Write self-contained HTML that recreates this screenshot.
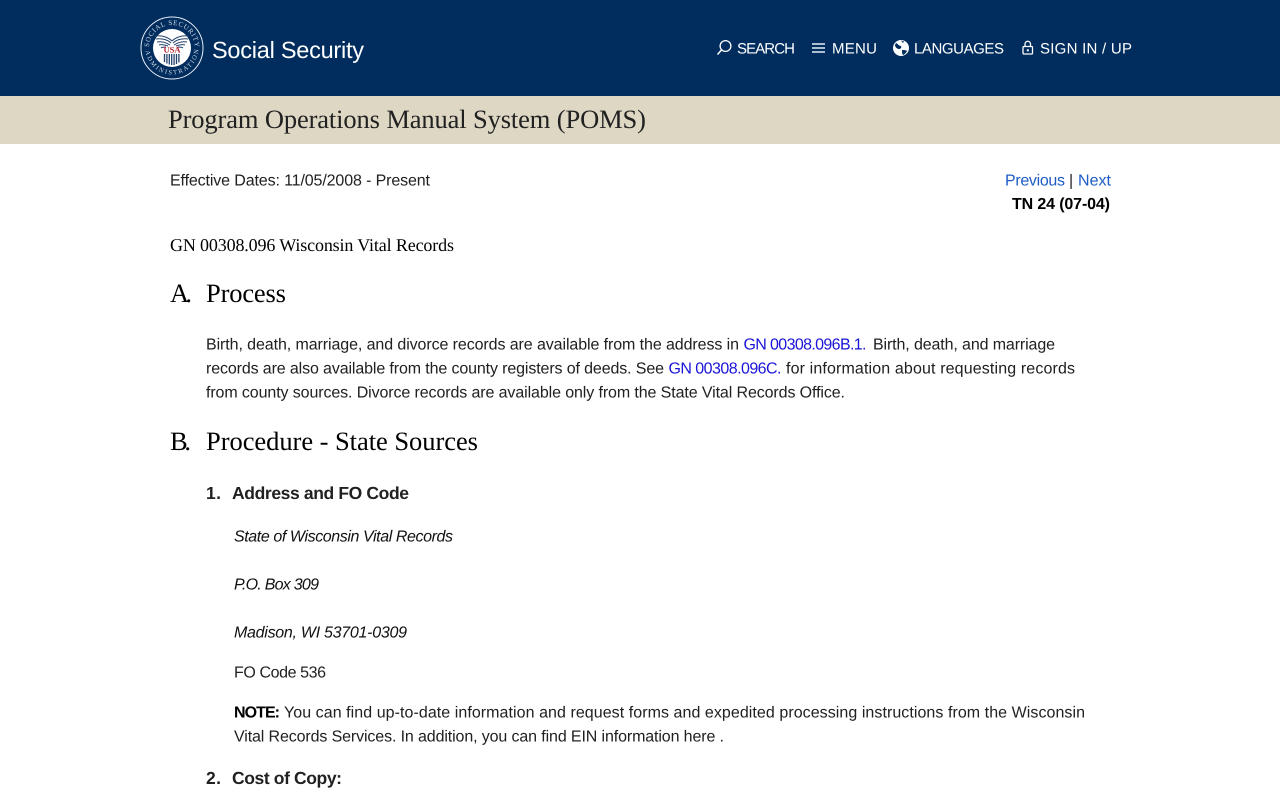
<!DOCTYPE html>
<html lang="en"><head><meta charset="utf-8"><title>POMS - GN 00308.096 Wisconsin Vital Records</title>
<style>
html,body{margin:0;padding:0;background:#fff;width:1280px;height:800px;overflow:hidden}
svg{position:absolute;left:0;top:0;display:block}
text{white-space:pre;text-rendering:geometricPrecision}
.s{font-family:"Liberation Sans",sans-serif;font-size:16px;fill:#212121}
.g{font-family:"Liberation Serif",serif}
.i{font-style:italic;fill:#111}
.b{font-weight:bold}
.l{fill:#1a14d8}
.p{fill:#1f5cc4}
.n{font-family:"Liberation Sans",sans-serif;font-size:15px;fill:#fff}
</style></head><body>
<svg width="1280" height="800" viewBox="0 0 1280 800" xmlns="http://www.w3.org/2000/svg">
<rect width="1280" height="96" fill="#002d5e"/>
<rect y="96" width="1280" height="48" fill="#ddd7c4"/>

<!-- logo -->
<circle cx="172" cy="48" r="31" fill="none" stroke="#e8eef5" stroke-width="1"/>
<circle cx="172" cy="48" r="19" fill="#fff"/>
<defs>
<path id="top" d="M149 48a23 23 0 0 1 46 0"/>
<path id="bot" d="M145.500 48a26.500 26.500 0 0 0 53 0"/>
</defs>
<text font-family="Liberation Serif,serif" font-size="7" fill="#cfd9e6"><textPath href="#top" startOffset="1" textLength="70">SOCIAL SECURITY</textPath></text>
<text font-family="Liberation Serif,serif" font-size="6.500" fill="#cfd9e6"><textPath href="#bot" startOffset="3" textLength="78">ADMINISTRATION</textPath></text>
<g fill="none" stroke="#24426c" stroke-width="1">
<path d="M172 41c-3-3-9-6-17-5"/><path d="M171 43c-3-3-9-5-15-4"/><path d="M170 45c-3-2-8-4-13-3"/><path d="M168 46c-3-1-6-2-9-1"/><path d="M166 47c-2 0-4 0-5 1"/>
<path d="M172 41c3-3 9-6 17-5"/><path d="M173 43c3-3 9-5 15-4"/><path d="M174 45c3-2 8-4 13-3"/><path d="M176 46c3-1 6-2 9-1"/><path d="M178 47c2 0 4 0 5 1"/>
</g>
<text x="172" y="52.500" text-anchor="middle" font-family="Liberation Serif,serif" font-size="8.500" font-weight="bold" fill="#b3232f">USA</text>
<path d="M164.500 54v8M166.900 54v9.500M169.300 54v10.500M171.700 54v11M174.100 54v11M176.500 54v10M178.900 54v8.500" stroke="#24426c" stroke-width="1.300"/>

<text class="n" x="212" y="58" style="font-size:23.500px" textLength="152">Social Security</text>

<!-- nav icons -->
<circle cx="725.500" cy="46" r="5.400" fill="none" stroke="#fff" stroke-width="1.300"/>
<path d="M721.500 50l-4 4.500" stroke="#fff" stroke-width="1.500" fill="none"/>
<text class="n" x="737" y="53.500" textLength="58">SEARCH</text>
<path d="M812 44h13M812 48h13M812 52h13" stroke="#e6edf5" stroke-width="1.500"/>
<text class="n" x="832" y="53.500" textLength="45">MENU</text>
<circle cx="901" cy="48" r="8" fill="#fff"/>
<path d="M896 43c2 1 3 3 5 3 1 2-1 3-2 3-2 0-4-2-4-4zM902 50c2 0 4 0 5 1-1 2-3 4-4 4-1-1-1-3-1-5zM901 40.500l3 1-1 1.500z" fill="#002d5e"/>
<text class="n" x="914" y="53.500" textLength="90">LANGUAGES</text>
<rect x="1023" y="46.500" width="9.500" height="7.500" rx="1" fill="none" stroke="#fff" stroke-width="1.300"/>
<path d="M1025 46.500v-2.500a2.750 2.750 0 0 1 5.500 0v2.500" fill="none" stroke="#fff" stroke-width="1.300"/>
<rect x="1026.800" y="49.300" width="2" height="2" fill="#fff"/>
<text class="n" x="1040" y="53.500" textLength="92">SIGN IN / UP</text>

<!-- banner -->
<text class="g" x="168" y="128" font-size="26.500" fill="#212121" textLength="478">Program Operations Manual System (POMS)</text>

<!-- meta -->
<text class="s" x="170" y="185.500" textLength="260">Effective Dates: 11/05/2008 - Present</text>
<text class="s p" x="1005" y="185.500" textLength="60">Previous</text>
<text class="s" x="1069" y="185.500">|</text>
<text class="s p" x="1078" y="185.500" textLength="33">Next</text>
<text class="s b" x="1012" y="209" style="font-size:16px;fill:#000" textLength="98">TN 24 (07-04)</text>

<text class="g" x="170" y="251" font-size="18" fill="#000" textLength="284">GN 00308.096 Wisconsin Vital Records</text>

<text class="g" x="170" y="302" font-size="26.500" fill="#000" textLength="22">A.</text>
<text class="g" x="206" y="302" font-size="26.500" fill="#000" textLength="80">Process</text>

<text class="s" x="206" y="349.500" textLength="533">Birth, death, marriage, and divorce records are available from the address in</text>
<text class="s l" x="743.500" y="349.500" textLength="123">GN 00308.096B.1.</text>
<text class="s" x="873" y="349.500" textLength="182">Birth, death, and marriage</text>
<text class="s" x="206" y="373.500" textLength="458">records are also available from the county registers of deeds. See</text>
<text class="s l" x="668.500" y="373.500" textLength="113">GN 00308.096C.</text>
<text class="s" x="786" y="373.500" textLength="289">for information about requesting records</text>
<text class="s" x="206" y="397.500" textLength="639">from county sources. Divorce records are available only from the State Vital Records Office.</text>

<text class="g" x="170" y="450" font-size="26.500" fill="#000" textLength="21">B.</text>
<text class="g" x="206" y="450" font-size="26.500" fill="#000" textLength="272">Procedure - State Sources</text>

<text class="s b" x="206" y="499" style="font-size:17.500px" textLength="15">1.</text>
<text class="s b" x="232" y="499" style="font-size:17.500px" textLength="177">Address and FO Code</text>

<text class="s i" x="234" y="541.500" textLength="219">State of Wisconsin Vital Records</text>
<text class="s i" x="234" y="589.500" textLength="85">P.O. Box 309</text>
<text class="s i" x="234" y="637.500" textLength="173">Madison, WI 53701-0309</text>
<text class="s" x="234" y="677.500" textLength="92">FO Code 536</text>

<text class="s b" x="234" y="717.500" style="fill:#000" textLength="46">NOTE:</text>
<text class="s" x="284" y="717.500" textLength="801">You can find up-to-date information and request forms and expedited processing instructions from the Wisconsin</text>
<text class="s" x="234" y="741.500" textLength="490">Vital Records Services. In addition, you can find EIN information here .</text>

<text class="s b" x="206" y="784" style="font-size:17.500px" textLength="15">2.</text>
<text class="s b" x="232" y="784" style="font-size:17.500px" textLength="110">Cost of Copy:</text>
</svg>
</body></html>
